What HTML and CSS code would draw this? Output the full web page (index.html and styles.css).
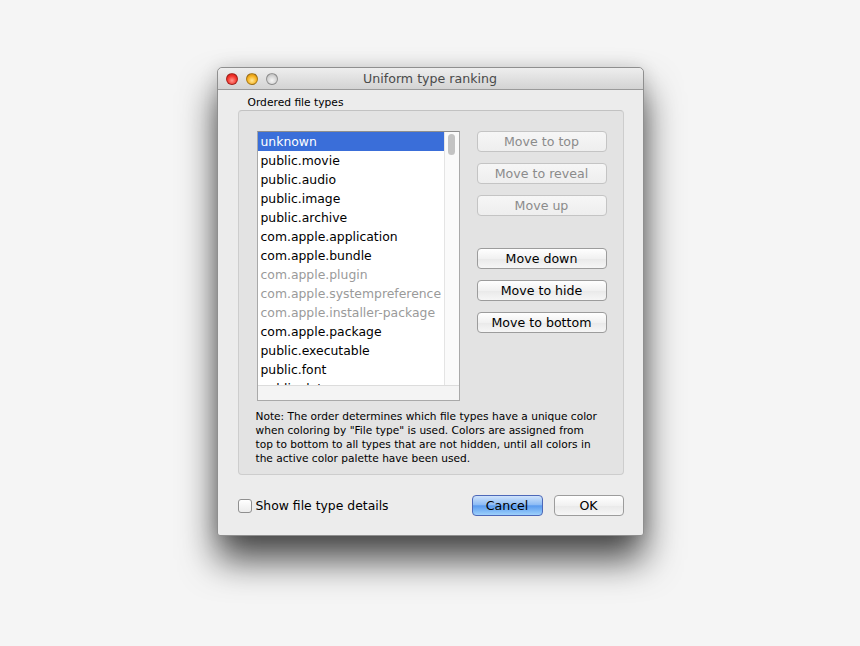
FILE: index.html
```html
<!DOCTYPE html>
<html lang="en">

<head>
    <meta charset="UTF-8">
    <title>Uniform type ranking</title>
    <link rel="stylesheet" href="styles.css">
</head>

<body>

    <div class="window">
        <div class="titlebar">
            <div class="lights">
                <span class="light red"></span>
                <span class="light yellow"></span>
                <span class="light off"></span>
            </div>
            <div class="title">Uniform type ranking</div>
        </div>

        <div class="content">
            <div class="group-label">Ordered file types</div>
            <div class="group">
                <div class="group-main">
                    <div class="listbox">
                        <div class="list-body">
                            <ul class="list">
                                <li class="selected">unknown</li>
                                <li>public.movie</li>
                                <li>public.audio</li>
                                <li>public.image</li>
                                <li>public.archive</li>
                                <li>com.apple.application</li>
                                <li>com.apple.bundle</li>
                                <li class="hidden-type">com.apple.plugin</li>
                                <li class="hidden-type">com.apple.systempreference</li>
                                <li class="hidden-type">com.apple.installer-package</li>
                                <li>com.apple.package</li>
                                <li>public.executable</li>
                                <li>public.font</li>
                                <li>public.data</li>
                            </ul>
                            <div class="vscroll">
                                <div class="thumb"></div>
                            </div>
                        </div>
                        <div class="hscroll"></div>
                    </div>
                    <div class="actions">
                        <button class="btn" disabled>Move to top</button>
                        <button class="btn" disabled>Move to reveal</button>
                        <button class="btn" disabled>Move up</button>
                        <button class="btn down">Move down</button>
                        <button class="btn">Move to hide</button>
                        <button class="btn">Move to bottom</button>
                    </div>
                </div>
                <p class="note">
                    Note: The order determines which file types have a unique color<br>
                    when coloring by "File type" is used. Colors are assigned from<br>
                    top to bottom to all types that are not hidden, until all colors in<br>
                    the active color palette have been used.
                </p>
            </div>

            <div class="footer">
                <label class="check"><span class="box"></span>Show file type details</label>
                <div class="dialog-buttons">
                    <button class="btn primary">Cancel</button>
                    <button class="btn">OK</button>
                </div>
            </div>
        </div>
    </div>

</body>

</html>
```

FILE: styles.css
```css
html {
    height: 100%;
}

body {
    box-sizing: border-box;
    min-height: 100%;
    margin: 0;
    padding-top: 67px;
    background-color: #f5f5f5;
    font-family: 'DejaVu Sans', 'Noto Sans', sans-serif;
    color: #000;
}

.window {
    width: 425px;
    margin: 0 auto;
    background-color: #ececec;
    border: 1px solid #8f8f8f;
    border-radius: 5px 5px 3px 3px;
    box-shadow: 0 24px 36px rgba(0, 0, 0, 0.7), 0 0 18px rgba(0, 0, 0, 0.12);
}

/* title bar */

.titlebar {
    display: grid;
    grid-template-columns: 1fr auto 1fr;
    align-items: center;
    height: 21px;
    border-bottom: 1px solid #9a9a9a;
    border-radius: 5px 5px 0 0;
    background: linear-gradient(#eeeeee, #d3d3d3);
}

.lights {
    display: flex;
    gap: 8px;
    padding-left: 8px;
}

.light {
    width: 12px;
    height: 12px;
    box-sizing: border-box;
    border-radius: 50%;
    border: 1px solid rgba(0, 0, 0, 0.3);
}

.light.red {
    background: radial-gradient(circle at 50% 65%, #ff9a90 0, #f5342c 55%, #bd1610 100%);
}

.light.yellow {
    background: radial-gradient(circle at 50% 65%, #ffe89a 0, #f7b21f 55%, #b97a12 100%);
}

.light.off {
    background: radial-gradient(circle at 50% 65%, #f6f6f6 0, #d4d4d4 55%, #acacac 100%);
}

.title {
    font-size: 12.6px;
    color: #4a4a4a;
}

/* body */

.content {
    padding: 6px 19px 19px 20px;
}

.group-label {
    font-size: 10.7px;
    line-height: 13px;
    margin: 0 0 1px 10px;
}

.group {
    background-color: #e3e3e3;
    border: 1px solid #cdcdcd;
    border-top-color: #c2c2c2;
    border-radius: 4px;
    padding: 20px 16px 9px 18px;
}

.group-main {
    display: flex;
    gap: 17px;
}

.listbox {
    width: 201px;
    border: 1px solid #a9a9a9;
    border-top-color: #8e8e8e;
    background-color: #f4f4f4;
}

.list-body {
    display: flex;
    height: 253px;
    background-color: #fff;
}

.list {
    flex: 1;
    list-style-type: none;
    margin: 0;
    padding: 0;
    overflow: hidden;
    font-size: 12.4px;
}

.list li {
    height: 19px;
    line-height: 20px;
    padding-left: 3px;
    white-space: nowrap;
}

.list li.selected {
    background-color: #3a6ed9;
    color: #fff;
}

.list li.hidden-type {
    color: #9a9a9a;
}

.vscroll {
    width: 14px;
    border-left: 1px solid #e4e4e4;
    background-color: #fafafa;
}

.thumb {
    width: 7px;
    height: 21px;
    margin: 2px 0 0 3px;
    border-radius: 4px;
    background-color: #c3c3c3;
}

.hscroll {
    height: 14px;
    border-top: 1px solid #dcdcdc;
}

.actions {
    display: flex;
    flex-direction: column;
    gap: 11px;
}

.btn {
    font-family: inherit;
    font-size: 12.6px;
    height: 21px;
    padding: 0;
    border: 1px solid #9c9c9c;
    border-radius: 4px;
    background: linear-gradient(#ffffff, #f1f1f1 50%, #e9e9e9 51%, #f6f6f6);
    color: #000;
}

.actions .btn {
    width: 130px;
}

.actions .btn.down {
    margin-top: 21px;
}

.btn:disabled {
    color: #8b8b8b;
    border-color: #c4c4c4;
    background: linear-gradient(#f6f6f6, #eeeeee);
}

.note {
    margin: 8px 0 0 -1px;
    font-size: 10.6px;
    line-height: 14px;
    white-space: nowrap;
}

/* footer */

.footer {
    display: flex;
    justify-content: space-between;
    align-items: center;
    margin-top: 20px;
}

.check {
    display: flex;
    align-items: center;
    gap: 4px;
    font-size: 12.4px;
}

.box {
    width: 12px;
    height: 12px;
    border: 1px solid #8f8f8f;
    border-radius: 3px;
    background: linear-gradient(#ffffff, #ececec);
}

.dialog-buttons {
    display: flex;
    gap: 11px;
}

.dialog-buttons .btn {
    width: 70px;
}

.btn.primary {
    width: 71px;
    border-color: #4d68b8;
    background: linear-gradient(#cfe3fb, #8ebcf5 45%, #5a9bef 52%, #9dd0fb);
}
```
